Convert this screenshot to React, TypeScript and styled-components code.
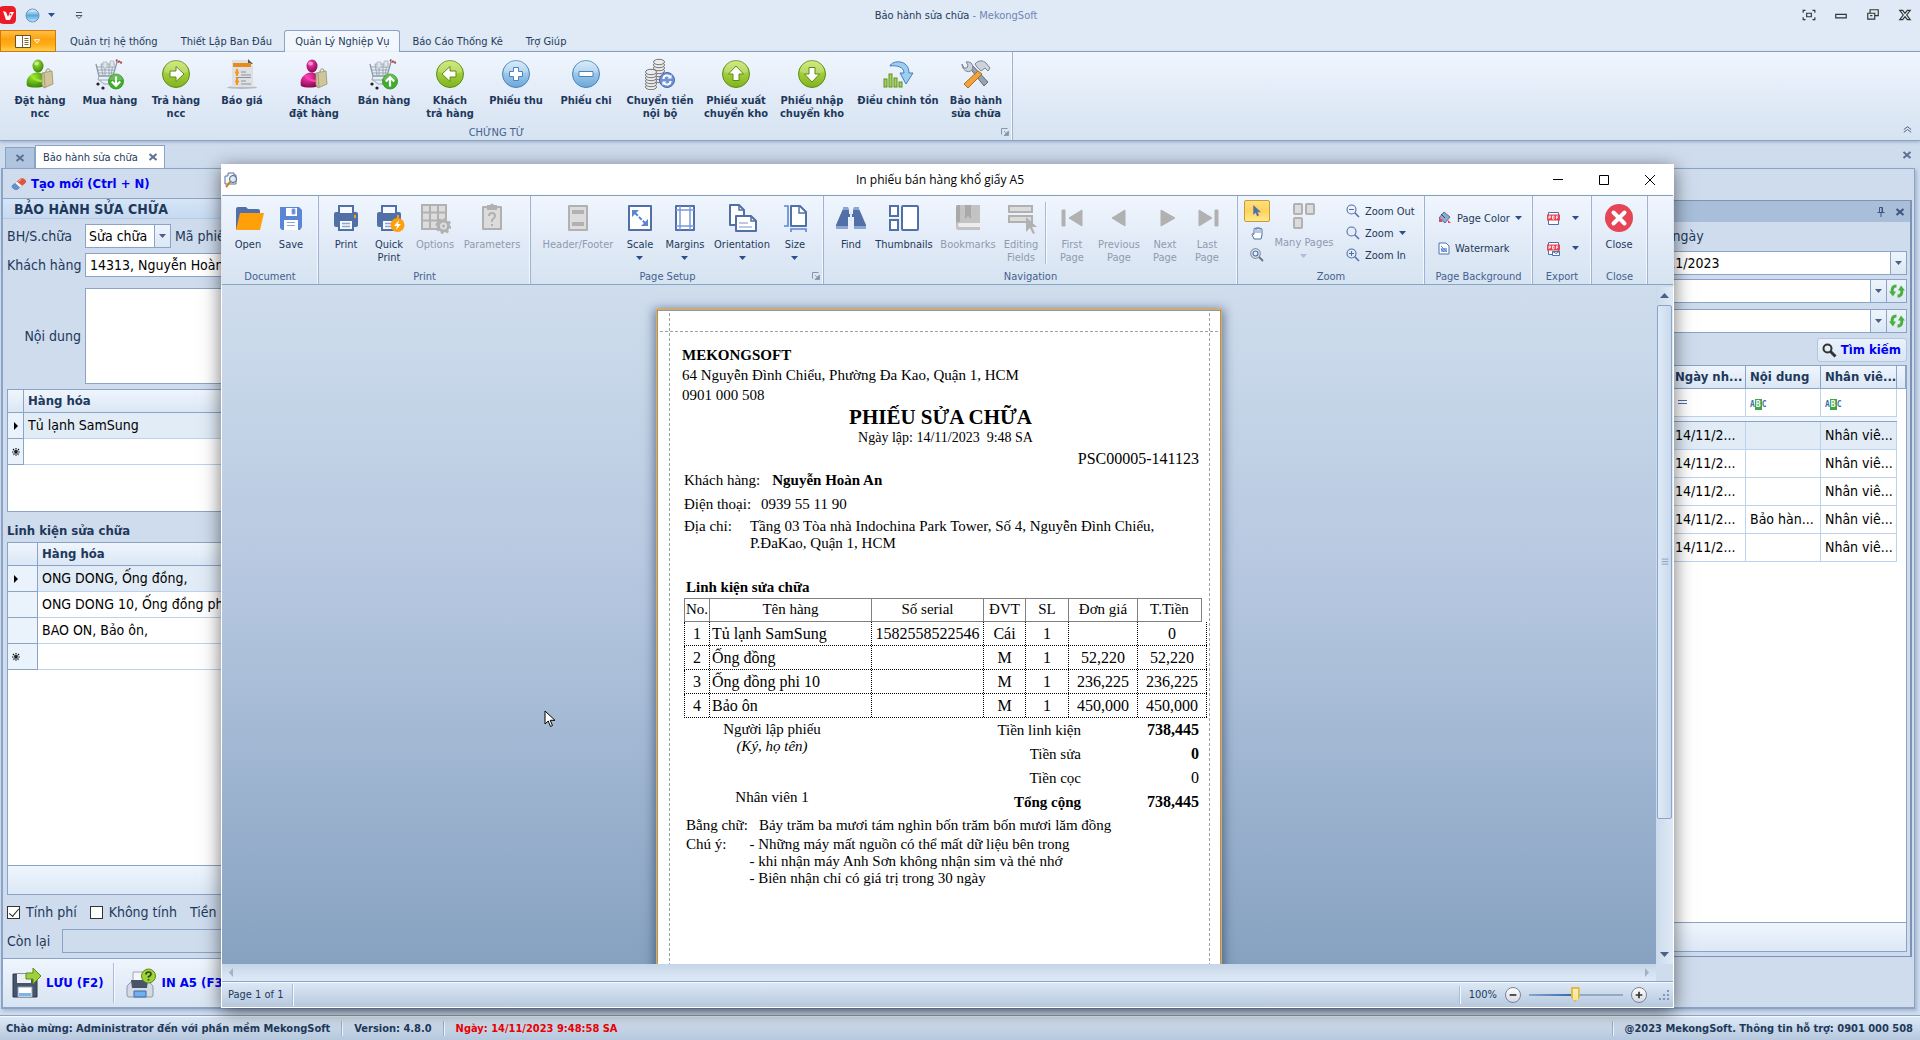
import React from 'react';
import styled, { createGlobalStyle, css } from 'styled-components';

const UI = '"DejaVu Sans Condensed", "DejaVu Sans", sans-serif';
const SERIF = '"Liberation Serif", serif';
const INK = '#1e395b';
const LINE = '#8ba3c4';
const PANEL = '#cfdced';

const Global = createGlobalStyle`
  * { box-sizing: border-box; }
  body { margin: 0; background: ${PANEL}; font: 11px/13px ${UI}; color: ${INK}; }
  button, input, select, textarea { font: inherit; color: inherit; margin: 0; }
  button { background: none; border: 0; padding: 0; cursor: default; }
  h1, h2, h3, p, ul { margin: 0; padding: 0; }
  svg { display: block; flex: none; }
`;

/* ---------- shell ---------- */

const Shell = styled.div`
  position: relative;
  display: flex;
  flex-direction: column;
  min-height: 100vh;
  background: ${PANEL};
  overflow: hidden;
`;
const TitleBar = styled.header`
  display: flex;
  align-items: center;
  height: 30px;
  background: #dfeaf6;
`;
const TitleSide = styled.div<{ $end?: boolean }>`
  display: flex;
  flex: 1 1 0;
  align-items: center;
  gap: ${(p) => (p.$end ? 18 : 8)}px;
  justify-content: ${(p) => (p.$end ? 'flex-end' : 'flex-start')};
  padding-right: ${(p) => (p.$end ? 8 : 0)}px;
`;
const AppName = styled.h1`
  font-size: 11px;
  font-weight: normal;
  color: ${INK};
  span { color: #6f86ae; }
`;
const TabStrip = styled.nav`
  display: flex;
  height: 22px;
  background: #dfeaf6;
  border-bottom: 1px solid ${LINE};
`;
const FileButton = styled.button`
  display: flex;
  align-items: center;
  justify-content: center;
  gap: 2px;
  width: 56px;
  height: 22px;
  border: 1px solid #d9770f;
  background: linear-gradient(#ffc04a, #fba20c 40%, #ffae1c 70%, #ffd34e);
`;
const RibbonTab = styled.button<{ $active?: boolean }>`
  height: 22px;
  padding: 0 10px;
  border: 1px solid transparent;
  border-bottom: 0;
  ${(p) =>
    p.$active &&
    css`
      background: #f2f7fe;
      border-color: ${LINE};
      border-radius: 3px 3px 0 0;
    `}
`;
const Tabs = styled.div`
  display: flex;
  gap: 1px;
  padding-left: 3px;
`;

/* ---------- ribbon ---------- */

const Ribbon = styled.div`
  display: flex;
  height: 89px;
  background: linear-gradient(#f0f6fe, #e3ecf8 45%, #d6e3f1);
  border-bottom: 1px solid ${LINE};
  box-shadow: 0 1px 3px rgba(90, 115, 155, 0.45);
  position: relative;
`;
const Group = styled.section<{ $w?: number }>`
  display: grid;
  grid-template-rows: 1fr 16px;
  width: ${(p) => (p.$w ? p.$w + 'px' : 'auto')};
  border-right: 1px solid #9fb3d0;
  box-shadow: inset -1px 0 #f3f8fe;
`;
const GroupBody = styled.div<{ $pad?: number; $top?: number }>`
  display: flex;
  align-items: flex-start;
  padding: ${(p) => p.$top ?? 6}px 0 0 ${(p) => p.$pad ?? 6}px;
`;
const GroupCaption = styled.h3`
  display: flex;
  align-items: center;
  justify-content: center;
  font-size: 11px;
  font-weight: normal;
  line-height: 13px;
  color: #44608f;
`;
const CaptionText = styled.span`
  flex: 1;
  padding-right: 8px;
  text-align: center;
`;
const LargeButton = styled.button<{ $w: number; $bold?: boolean }>`
  display: flex;
  flex-direction: column;
  align-items: center;
  width: ${(p) => p.$w}px;
  font-weight: ${(p) => (p.$bold ? 'bold' : 'normal')};
  color: ${INK};
  white-space: nowrap;
  gap: 4px;
  &:disabled { color: #8e9bae; }
`;
const ButtonLabel = styled.span`
  display: flex;
  flex-direction: column;
  align-items: center;
`;
const ArrowSlot = styled.span`
  display: flex;
  height: 13px;
  align-items: center;
`;
const Divider = styled.span<{ $h: number }>`
  width: 2px;
  height: ${(p) => p.$h}px;
  margin: 0 3px;
  border-left: 1px solid #a9bcd6;
  border-right: 1px solid #f6faff;
`;
const SmallColumn = styled.div<{ $pad?: number; $gap?: number }>`
  display: flex;
  flex-direction: column;
  gap: ${(p) => p.$gap ?? 0}px;
  padding-left: ${(p) => p.$pad ?? 0}px;
`;
const SmallButton = styled.button`
  display: flex;
  align-items: center;
  gap: 5px;
  height: 22px;
  padding: 0 2px;
  white-space: nowrap;
`;
const ToolButton = styled.button<{ $on?: boolean }>`
  display: flex;
  align-items: center;
  justify-content: center;
  width: 26px;
  height: 22px;
  border: 1px solid transparent;
  border-radius: 2px;
  ${(p) =>
    p.$on &&
    css`
      border-color: #c79a3c;
      background: linear-gradient(#ffdf7c, #ffd25e 50%, #ffe98a);
    `}
`;

/* ---------- documents ---------- */

const DocTabs = styled.div`
  display: flex;
  align-items: flex-end;
  height: 27px;
  padding: 0 8px 0 5px;
`;
const DocTab = styled.div<{ $active?: boolean }>`
  display: flex;
  align-items: center;
  justify-content: space-between;
  gap: 10px;
  height: ${(p) => (p.$active ? 23 : 21)}px;
  padding: ${(p) => (p.$active ? '0 6px 0 7px' : '0 9px')};
  border: 1px solid ${LINE};
  border-bottom: 0;
  background: ${(p) => (p.$active ? '#fff' : '#afc4de')};
`;
const Spacer = styled.span`
  flex: 1;
`;
const TabsClose = styled.button`
  align-self: center;
`;
const Workspace = styled.main`
  display: flex;
  flex: 1;
  margin: 0 5px 6px 1px;
  border: 1px solid ${LINE};
  border-left-width: 2px;
  border-bottom-width: 2px;
  box-shadow: 2px 2px 3px rgba(90, 115, 155, 0.35);
`;
const LeftPane = styled.section`
  display: flex;
  flex-direction: column;
  flex: 1;
  min-width: 0;
`;
const PaneToolbar = styled.div`
  display: flex;
  align-items: center;
  height: 29px;
  padding-left: 8px;
`;
const LinkButton = styled.button<{ $gap?: number }>`
  display: flex;
  align-items: center;
  gap: ${(p) => p.$gap ?? 4}px;
  font-size: 13px;
  line-height: 16px;
  font-weight: bold;
  color: #0000f5;
  white-space: nowrap;
`;
const PaneTitle = styled.h2`
  height: 21px;
  padding-left: 11px;
  border-top: 1px solid ${LINE};
  border-bottom: 1px solid #b3cbe8;
  background: linear-gradient(#d7e5f6, #c6daf1);
  font-size: 14px;
  line-height: 20px;
`;
const Form = styled.form`
  display: flex;
  flex-direction: column;
  flex: 1;
  padding: 5px 4px 5px;
  font-size: 14px;
  line-height: 17px;
`;
const FormRow = styled.div<{ $mb?: number; $gap?: number; $h?: number }>`
  display: flex;
  align-items: center;
  gap: ${(p) => p.$gap ?? 4}px;
  height: ${(p) => (p.$h ? p.$h + 'px' : 'auto')};
  margin-bottom: ${(p) => p.$mb ?? 5}px;
`;
const FieldLabel = styled.label<{ $w?: number; $end?: boolean }>`
  flex: none;
  width: ${(p) => (p.$w ? p.$w + 'px' : 'auto')};
  text-align: ${(p) => (p.$end ? 'right' : 'left')};
  white-space: nowrap;
`;
const boxed = css`
  border: 1px solid ${LINE};
  background: #fff;
  color: #000;
  border-radius: 0;
  outline: 0;
`;
const TextInput = styled.input`
  ${boxed}
  flex: 1;
  min-width: 0;
  height: 24px;
  padding: 0 4px;
  &:read-only { background: transparent; }
`;
const TextArea = styled.textarea`
  ${boxed}
  flex: 1;
  height: 96px;
  resize: none;
`;
const Combo = styled.div<{ $w?: number }>`
  ${boxed}
  display: flex;
  height: 24px;
  width: ${(p) => (p.$w ? p.$w + 'px' : '100%')};
`;
const ComboSelect = styled.select`
  appearance: none;
  flex: 1;
  min-width: 0;
  border: 0;
  padding: 0 3px;
  background: transparent;
  color: #000;
`;
const ComboInput = styled.input`
  flex: 1;
  min-width: 0;
  border: 0;
  padding: 0 6px;
  background: transparent;
  color: #000;
`;
const ComboButton = styled.button<{ $w?: number }>`
  display: flex;
  align-items: center;
  justify-content: center;
  width: ${(p) => p.$w ?? 16}px;
  border-left: 1px solid ${LINE};
  background: linear-gradient(#eef4fd, #dbe7f5);
`;
const CheckLabel = styled.label`
  display: flex;
  align-items: center;
  gap: 6px;
  white-space: nowrap;
`;
const Check = styled.input`
  appearance: none;
  width: 13px;
  height: 13px;
  border: 1px solid #333;
  background: #fff;
  &:checked::before {
    content: '';
    display: block;
    width: 9px;
    height: 4px;
    margin: 2px 0 0 1px;
    border-left: 1px solid #222;
    border-bottom: 1px solid #222;
    transform: rotate(-50deg);
  }
`;
const SubTitle = styled.h3`
  height: 30px;
  padding-top: 2px;
  font-size: 13px;
  line-height: 33px;
`;
const GridFrame = styled.div<{ $h?: number; $grow?: boolean }>`
  display: flex;
  flex-direction: column;
  height: ${(p) => (p.$h ? p.$h + 'px' : 'auto')};
  flex: ${(p) => (p.$grow ? 1 : 'none')};
  border: 1px solid ${LINE};
  background: #fff;
`;
const GridFooter = styled.div`
  height: 29px;
  margin-top: auto;
  border-top: 1px solid ${LINE};
  background: linear-gradient(#eff5fd, #dce8f6);
`;
const DataTable = styled.table`
  width: 100%;
  border-collapse: separate;
  border-spacing: 0;
  table-layout: fixed;
  font-size: 14px;
  line-height: 16px;
  color: #000;
`;
const HeadCell = styled.th`
  height: 23px;
  padding: 0 4px;
  border-right: 1px solid ${LINE};
  border-bottom: 1px solid ${LINE};
  background: linear-gradient(#eff5fd, #dbe7f5);
  font-size: 13px;
  text-align: left;
  white-space: nowrap;
  color: ${INK};
`;
const Cell = styled.td<{ $h: number; $on?: boolean; $rule?: boolean }>`
  height: ${(p) => p.$h}px;
  padding: 0 4px 2px;
  border-bottom: 1px solid #bcd2ee;
  border-right: ${(p) => (p.$rule ? '1px solid #bcd2ee' : '0')};
  background: ${(p) => (p.$on ? '#e1ecf7' : '#fff')};
  white-space: nowrap;
`;
const MarkCell = styled.td`
  padding: 0 0 0 4px;
  border-right: 1px solid ${LINE};
  border-bottom: 1px solid ${LINE};
  background: #eaf2fc;
`;
const SplitRow = styled.td`
  height: 5px;
  padding: 0;
  border-bottom: 1px solid ${LINE};
  background: #f1f6fd;
`;
const ActionBar = styled.div`
  display: flex;
  align-items: center;
  height: 49px;
  padding-left: 9px;
  border-top: 1px solid ${LINE};
  background: linear-gradient(#eff5fd, #d8e4f2);
`;

/* ---------- search panel ---------- */

const SearchPanel = styled.aside`
  display: flex;
  flex-direction: column;
  width: 550px;
  margin: 31px 2px 50px 6px;
  border: 1px solid #7e93b3;
  border-right-width: 2px;
`;
const PanelHead = styled.header`
  display: flex;
  align-items: center;
  justify-content: flex-end;
  gap: 10px;
  height: 21px;
  padding-right: 5px;
  background: #a8bed9;
`;
const PanelBody = styled.form`
  display: flex;
  flex-direction: column;
  flex: 1;
  padding: 6px 3px 4px 4px;
  font-size: 14px;
  line-height: 17px;
`;
const DateGrid = styled.div`
  display: grid;
  grid-template-columns: 1fr 1fr;
  gap: 6px;
  margin-bottom: 4px;
  label { padding-left: 3px; }
`;
const Stack = styled.div`
  display: flex;
  flex-direction: column;
  gap: 6px;
  margin-bottom: 5px;
`;
const SearchButton = styled(LinkButton)`
  align-self: flex-end;
  height: 24px;
  margin-bottom: 3px;
  padding: 0 5px 0 4px;
  border: 1px solid #b4c5dc;
  border-radius: 3px;
  background: linear-gradient(#eaf2fb, #dbe6f4);
`;
const FilterMark = styled.span`
  display: inline-flex;
  align-items: center;
  font: bold 8px/9px "DejaVu Sans Mono", monospace;
  color: #4c6ea5;
  b {
    padding: 1px;
    background: #3fa648;
    color: #fff;
  }
`;

/* ---------- status bar ---------- */

const StatusBar = styled.footer`
  display: flex;
  align-items: center;
  height: 25px;
  padding: 0 7px 0 6px;
  border-top: 1px solid ${LINE};
  box-shadow: inset 0 1px #f4f9ff;
  background: linear-gradient(#dde9f6, #b6c8de);
  font-weight: bold;
  white-space: nowrap;
`;
const StatusText = styled.span<{ $alert?: boolean }>`
  color: ${(p) => (p.$alert ? '#f00000' : INK)};
`;
const StatusRule = styled.span`
  width: 2px;
  height: 15px;
  margin: 0 11px;
  border-left: 1px solid #9fb0c8;
  border-right: 1px solid #eef4fb;
`;

/* ---------- preview window ---------- */

const Preview = styled.section`
  position: absolute;
  inset: 164px 246px 32px 221px;
  display: flex;
  flex-direction: column;
  border: 1px solid #fff;
  background: #fff;
  box-shadow: 0 4px 18px rgba(0, 0, 0, 0.55);
`;
const PreviewTitle = styled.header`
  display: flex;
  align-items: center;
  height: 31px;
  border-bottom: 1px solid ${LINE};
  h2 {
    font: 12px/16px "Open Sans", "Noto Sans", sans-serif;
    color: #000;
  }
`;
const WindowButtons = styled.div`
  display: flex;
  flex: 1 1 0;
  justify-content: flex-end;
  gap: 34px;
  padding-right: 17px;
`;
const WindowIcon = styled.div`
  flex: 1 1 0;
  padding-left: 2px;
`;
const Canvas = styled.div`
  position: relative;
  display: grid;
  grid-template-columns: 1fr 17px;
  grid-template-rows: minmax(0, 1fr) 17px;
  flex: 1;
  min-height: 0;
  padding-top: 2px;
  background: linear-gradient(#cfdded, #b4c6df 45%, #84a0bf);
`;
const Sheets = styled.div`
  overflow: hidden;
  padding-top: 22px;
`;
const VScroll = styled.div`
  display: flex;
  flex-direction: column;
  align-items: center;
  padding: 4px 0 5px;
  gap: 5px;
  background: linear-gradient(90deg, #cbdaea, #dfeaf7);
`;
const VThumb = styled.div`
  display: flex;
  align-items: center;
  justify-content: center;
  width: 15px;
  height: 77%;
  border: 1px solid ${LINE};
  border-radius: 2px;
  background: linear-gradient(90deg, #dfeaf7, #c9d9ec);
`;
const HScroll = styled.div`
  display: flex;
  align-items: center;
  justify-content: space-between;
  padding: 0 5px;
  background: linear-gradient(#c6d6e8, #dfeaf7);
`;
const Corner = styled.div`
  background: ${PANEL};
`;
const PreviewStatus = styled.footer`
  display: flex;
  align-items: center;
  height: 26px;
  padding: 0 3px 0 6px;
  border-top: 1px solid ${LINE};
  box-shadow: inset 0 1px #f4f9ff;
  background: linear-gradient(#dde9f6, #b6c8de);
  white-space: nowrap;
`;
const ZoomBox = styled.label`
  display: flex;
  align-items: center;
  gap: 8px;
`;
const ZoomRange = styled.input`
  appearance: none;
  width: 94px;
  height: 16px;
  background: linear-gradient(90deg, #8aa5cb, #2f68ad 48%, #94a9c6 50%) center / 100% 2px no-repeat;
  &::-webkit-slider-thumb {
    appearance: none;
    width: 9px;
    height: 15px;
    background: linear-gradient(#fdf3c0, #fbe28a);
    border: 2px solid #e8b83c;
    clip-path: polygon(0 0, 100% 0, 100% 68%, 50% 100%, 0 68%);
  }
`;
const RoundButton = styled.button`
  display: flex;
  align-items: center;
  justify-content: center;
  width: 16px;
  height: 16px;
  border: 1px solid #7b8394;
  border-radius: 50%;
  background: linear-gradient(#fff, #d5d9e2);
`;
const Gap = styled.span<{ $w: number }>`
  width: ${(p) => p.$w}px;
`;
const Pointer = styled.div`
  position: absolute;
  left: 322px;
  top: 425px;
`;

/* ---------- receipt ---------- */

const Sheet = styled.article`
  position: relative;
  width: 566px;
  min-height: 796px;
  margin: 0 auto;
  padding: 35px 16px 20px 25px;
  border: 1px solid #f5a623;
  background: #fff;
  box-shadow: inset 0 0 0 1px #8f97a6, 0 2px 10px 2px rgba(30, 50, 80, 0.55);
  font: 15px/17px ${SERIF};
  color: #000;
`;
const VGuide = styled.i<{ $right?: boolean }>`
  position: absolute;
  top: 3px;
  bottom: 3px;
  ${(p) => (p.$right ? 'right: 11px' : 'left: 12px')};
  border-left: 1px dashed #a0a0a0;
`;
const HGuide = styled.i`
  position: absolute;
  top: 21px;
  left: 3px;
  right: 3px;
  border-top: 1px dashed #a0a0a0;
`;
const Letterhead = styled.header`
  line-height: 20px;
`;
const SlipTitle = styled.h2`
  padding-right: 6px;
  text-align: center;
  font-size: 21px;
  line-height: 24px;
`;
const SlipDate = styled.p`
  padding-left: 4px;
  text-align: center;
  font-size: 14px;
  line-height: 18px;
`;
const SlipCode = styled.p`
  padding: 2px 6px 3px 0;
  text-align: right;
  font-size: 16px;
  line-height: 20px;
`;
const Facts = styled.dl<{ $in?: number }>`
  margin: 0;
  padding-left: ${(p) => p.$in ?? 2}px;
`;
const Fact = styled.div<{ $gap: number; $h?: number }>`
  display: flex;
  gap: ${(p) => p.$gap}px;
  min-height: ${(p) => p.$h ?? 24}px;
  dd, dt { margin: 0; }
  dt { white-space: nowrap; }
`;
const PartsTitle = styled.h3`
  padding: 0 0 2px 4px;
  font-size: 15px;
  line-height: 17px;
`;
const Parts = styled.table`
  display: block;
  margin-left: 2px;
  font-size: 16px;
  line-height: 23px;
  thead, tbody { display: block; }
`;
const HeadLine = styled.tr`
  display: grid;
  grid-template-columns: 25px 162px 112px 42px 43px 69px 64px;
  width: 518px;
  border-top: 1px solid #808080;
  border-left: 1px solid #808080;
  border-bottom: 1px solid #808080;
`;
const PartHead = styled.th`
  padding: 0;
  height: 22px;
  border-right: 1px solid #808080;
  font-size: 15px;
  font-weight: normal;
  line-height: 21px;
`;
const PartLine = styled.tr`
  display: grid;
  grid-template-columns: 25px 162px 112px 42px 43px 69px 69px;
  width: 523px;
  border-left: 1px dotted #000;
  border-bottom: 1px dotted #000;
`;
const PartCell = styled.td<{ $left?: boolean }>`
  height: 23px;
  padding: ${(p) => (p.$left ? '0 0 0 2px' : '0')};
  border-right: 1px dotted #000;
  text-align: ${(p) => (p.$left ? 'left' : 'center')};
`;
const Closing = styled.div`
  display: grid;
  grid-template-columns: 180px 219px 118px;
  height: 99px;
  padding-top: 3px;
`;
const Signature = styled.div`
  display: flex;
  flex-direction: column;
  align-items: center;
  padding-bottom: 11px;
  line-height: 17px;
  em { flex: 1; }
`;
const SumColumn = styled.div<{ $big?: boolean }>`
  display: flex;
  flex-direction: column;
  text-align: right;
  font-size: ${(p) => (p.$big ? 16 : 15)}px;
  line-height: 18px;
  gap: 6px;
`;
const Notes = styled.ul`
  list-style: none;
`;

/* ---------- icons ---------- */

type Tone = 'green' | 'blue';
const tones = {
  green: ['#c3e45a', '#7fb41c', '#5d8c13'],
  blue: ['#cbe7f8', '#6ba6da', '#4b82ba'],
};
const Orb = ({ tone, d, id }: { tone: Tone; d: string; id: string }) => (
  <svg width="32" height="32" viewBox="0 0 32 32">
    <defs>
      <linearGradient id={id} x1="0" y1="0" x2="0" y2="1">
        <stop offset="0" stopColor={tones[tone][0]} />
        <stop offset="1" stopColor={tones[tone][1]} />
      </linearGradient>
    </defs>
    <circle cx="16" cy="16" r="13.5" fill={`url(#${id})`} stroke={tones[tone][2]} />
    <path d="M4 14a12 12 0 0 1 24 0q-12 4-24 0z" fill="#fff" opacity=".22" />
    <path d={d} fill="#fff" stroke={tones[tone][2]} strokeLinejoin="round" />
  </svg>
);
const ARROW_R = 'M10 13h6V8.500l8 7.500-8 7.500V19h-6z';
const ARROW_L = 'M22 13h-6V8.500L8 16l8 7.500V19h6z';
const ARROW_U = 'M13 22.500V16H8.500L16 8l7.500 8H19v6.500z';
const ARROW_D = 'M13 9.500V16H8.500L16 24l7.500-8H19V9.500z';
const PLUS = 'M13.500 9.500h5v4h4v5h-4v4h-5v-4h-4v-5h4z';
const MINUS = 'M9 13.500h14v5H9z';

const Shopper = ({ c, dark, id }: { c: string; dark: string; id: string }) => (
  <svg width="32" height="32" viewBox="0 0 32 32">
    <defs>
      <radialGradient id={id} cx=".4" cy=".3" r=".8">
        <stop offset="0" stopColor={c} />
        <stop offset="1" stopColor={dark} />
      </radialGradient>
    </defs>
    <path d="M3 28c-1-5 0-9 5-12 3-2 8-2 10 0 3 3 3 9 2 12-4 2-13 2-17 0z" fill={`url(#${id})`} />
    <ellipse cx="14" cy="8" rx="5.500" ry="6.500" fill={`url(#${id})`} />
    <ellipse cx="12.500" cy="5.500" rx="2.500" ry="2" fill="#fff" opacity=".45" />
    <path d="M7 17c3 4 6 6 11 6" stroke={c} strokeWidth="2.500" fill="none" />
    <path d="M18 15l10-2 1 13-9 4-2-3z" fill="#cfc79b" stroke="#97906a" strokeWidth=".8" />
    <path d="M20 15l1 14" stroke="#97906a" strokeWidth=".8" />
    <path d="M22 14c0-4 4-4 4-1" stroke="#8d8460" fill="none" />
  </svg>
);
const Cart = ({ up }: { up?: boolean }) => (
  <svg width="32" height="32" viewBox="0 0 32 32">
    <path d="M2 6l3 12h14l4-14h4" fill="none" stroke="#8b98a3" strokeWidth="1.300" />
    <path d="M3 9h18M4 12h16M5 15h15M7 6l2 12M11 4v14M15 6v12M19 5l-2 13M7 6h14M5 18l-1 4h14" fill="none" stroke="#9aa6b0" />
    <path d="M9 4h4v6H9zM16 3h4v6h-4z" fill="#dfe5ea" stroke="#a3aeb8" strokeWidth=".7" />
    <path d="M22 2l6 3" stroke="#b23a3a" strokeWidth="2.200" strokeDasharray="1.500 1" />
    <circle cx="4" cy="26" r="1.600" fill="#222" />
    <circle cx="9" cy="30" r="1.600" fill="#222" />
    <path d="M5 22l5 4h6" stroke="#9aa6b0" fill="none" />
    <circle cx="22" cy="23.500" r="7.500" fill="#3fae2b" stroke="#2b8a1c" strokeWidth=".8" />
    <path d="M15.500 22a6.500 6.500 0 0 1 13 0z" fill="#fff" opacity=".2" />
    <path d={up ? 'M22 28.500v-9M17.800 23.500l4.200-4.300 4.200 4.300' : 'M22 18.500v9M17.800 23.500l4.200 4.300 4.200-4.300'} fill="none" stroke="#fff" strokeWidth="2.200" />
  </svg>
);
const Quote = () => (
  <svg width="32" height="32" viewBox="0 0 32 32">
    <ellipse cx="16" cy="29.500" rx="15" ry="1.500" fill="#9a9a9a" opacity=".6" />
    <path d="M6 2h16l5 5v22H6z" fill="#dfe0e3" />
    <path d="M22 1l5 5h-5z" fill="#555a60" />
    <path d="M7 5h18v4H7z" fill="#e78b1c" />
    <path d="M15 14h5M15 17h10M10 19.500h15M15 23h5M15 26h10" stroke="#8d9299" strokeWidth="1.200" />
    <path d="M11 11v7M9 14.500h4M11 20v7M9 23.500h4" stroke="#f39a1e" strokeWidth="2.200" />
  </svg>
);
const Coins = () => (
  <svg width="34" height="32" viewBox="0 0 34 32">
    {[22, 19, 16, 13, 10, 7, 4].map((y) => (
      <ellipse key={y} cx="16" cy={y} rx="5.500" ry="2.700" fill="#ececec" stroke="#777" />
    ))}
    {[29, 26, 23, 20, 17, 14].map((y) => (
      <ellipse key={y} cx="8" cy={y} rx="5.500" ry="2.700" fill="#ececec" stroke="#777" />
    ))}
    <circle cx="24" cy="22" r="7.500" fill="#6f93d6" stroke="#4568b0" />
    <path d="M20.500 21c0-4 5-4.500 6.500-2M27.500 23c0 4-5 4.500-6.500 2" stroke="#fff" strokeWidth="2" fill="none" />
    <path d="M28.500 16.500v4h-4zM19.500 27.500v-4h4z" fill="#fff" />
  </svg>
);
const StockAdjust = () => (
  <svg width="34" height="32" viewBox="0 0 34 32">
    {[[3, 21], [8, 16], [13, 20], [18, 24]].map(([x, y]) => (
      <rect key={x} x={x} y={y} width="3" height={29 - y} fill="#a8cf5a" stroke="#5f8f1e" />
    ))}
    <path d="M9 8c2-6 19-7 19 7h4l-7 11-6-11h4c0-6-7-8-14-7z" fill="#9fcdf0" stroke="#3f7fbd" strokeLinejoin="round" />
  </svg>
);
const Tools = () => (
  <svg width="32" height="32" viewBox="0 0 32 32">
    <path d="M9 9l15 19 4-4L12 7z" fill="#98a2b1" stroke="#5f6a7b" />
    <path d="M2 6l2 4h3l1-3-2-3c6-1 8 4 6 8-4 4-10 0-10-6z" fill="#ccd3dc" stroke="#7a8594" />
    <path d="M15 6c3-4 8-4 11-1l4 5-2 3-3-3-4 3-4-4z" fill="#ccd3dc" stroke="#7a8594" />
    <path d="M18 13l4 3L8 30l-4-4z" fill="#f2a33a" stroke="#b8681a" />
  </svg>
);
const Down = ({ c = '#2c4f8c', w = 7 }: { c?: string; w?: number }) => (
  <svg width={w} height="4" viewBox="0 0 7 4">
    <path d="M0 0h7L3.500 4z" fill={c} />
  </svg>
);
const Cross = ({ c = '#5f6f94', s = 10 }: { c?: string; s?: number }) => (
  <svg width={s} height={s} viewBox="0 0 10 10">
    <path d="M1.500 2l7 6M8.500 2l-7 6" stroke={c} strokeWidth="2" />
  </svg>
);
const Launcher = () => (
  <svg width="8" height="8" viewBox="0 0 8 8">
    <path d="M.5 6.500v-6h6" fill="none" stroke="#8793a8" />
    <path d="M7.500 3v4.500H3zM3 3l3 3" fill="#8793a8" stroke="#8793a8" strokeWidth=".8" />
  </svg>
);

const BL = '#5170a8';
const GR = '#b1b1b1';
const I = ({ children, w = 32 }: { children: React.ReactNode; w?: number }) => (
  <svg width={w} height="32" viewBox={`0 0 ${w} 32`}>
    {children}
  </svg>
);
const FolderIcon = () => (
  <I>
    <path d="M4 7q0-2 2-2h8l2 2h10q2 0 2 2v6H9L5 27H4z" fill={BL} />
    <path d="M8 11h24l-4 17H4z" fill="#ff9f0a" />
  </I>
);
const SaveIcon = () => (
  <I>
    <path d="M5 5h19l3 3v17l-2 3H7l-2-2z" fill="#5b86d6" />
    <path d="M11 6h11v8H11z M9 18h14v10H9z" fill="#fff" />
    <path d="M17 7h3v5h-3zM12 20.500h8M12 23.500h8" fill="#5b86d6" stroke="#8ca7dc" strokeWidth="1" />
  </I>
);
const PrinterShape = () => (
  <>
    <path d="M4 12q0-2 2-2h20q2 0 2 2v11q0 2-2 2H6q-2 0-2-2z" fill={BL} />
    <path d="M9 4h14v8H9zM9 18h14v10H9z" fill="#f6f9fe" stroke={BL} strokeWidth="2" />
    <path d="M12 21.500h8M12 24.500h8" stroke="#8fa4cd" strokeWidth="1.500" />
    <path d="M24 13h2v3h-2z" fill="#ff9f0a" />
  </>
);
const PrintIcon = () => <I><PrinterShape /></I>;
const QuickPrintIcon = () => (
  <I>
    <PrinterShape />
    <circle cx="24.500" cy="23" r="7" fill="#ff9f0a" />
    <path d="M26 18l-5 6h3l-1 4 5-6h-3z" fill="#fff" />
  </I>
);
const OptionsIcon = () => (
  <I>
    <path d="M3 3h24v24H3zM3 10.500h24M3 18.500h24M11 3v24M19 3v24" fill="#dcdcdc" stroke={GR} strokeWidth="2" />
    <circle cx="24.500" cy="24" r="5" fill="#ddd" stroke={GR} strokeWidth="3" />
    <circle cx="24.500" cy="24" r="7" fill="none" stroke={GR} strokeWidth="2" strokeDasharray="2.700 2.800" />
    <circle cx="24.500" cy="24" r="1.500" fill={GR} />
  </I>
);
const ParametersIcon = () => (
  <I>
    <path d="M7 5h18v22H7z" fill="#dcdcdc" stroke={GR} strokeWidth="2" strokeLinejoin="round" />
    <path d="M11 3h3q2-3 4 0h3v5H11z" fill={GR} />
    <path d="M13 14q0-3 3-3t3 3q0 2-3 4v2M16 22v2" fill="none" stroke={GR} strokeWidth="2" />
  </I>
);
const HeaderFooterIcon = () => (
  <I>
    <path d="M7 4h18v24H7z" fill="#dcdcdc" stroke={GR} strokeWidth="2" strokeLinejoin="round" />
    <path d="M10 8h12v4H10zM10 20h12v4H10z" fill={GR} />
  </I>
);
const ScaleIcon = () => (
  <I>
    <path d="M5 4h22v24H5z" fill="#fff" stroke={BL} strokeWidth="2" strokeLinejoin="round" />
    <path d="M8 8h7l-7 7zM24 24h-7l7-7z" fill="#5b86d6" />
    <path d="M11 11l10 10" stroke="#5b86d6" strokeWidth="2" strokeDasharray="4 1.500" />
  </I>
);
const MarginsIcon = () => (
  <I>
    <path d="M7 4h18v24H7z" fill="#fff" stroke={BL} strokeWidth="2" strokeLinejoin="round" />
    <path d="M11 4v24M21 4v24M7 8h18M7 24h18" stroke="#7b9bdc" strokeWidth="1.500" />
  </I>
);
const OrientationIcon = () => (
  <I>
    <path d="M4 3h9l5 5v15H4z" fill="#fff" stroke={BL} strokeWidth="2" strokeLinejoin="round" />
    <path d="M13 3v5h5" fill="none" stroke={BL} strokeWidth="1.500" />
    <path d="M10 14h15l5 5v10H10z" fill="#fff" stroke={BL} strokeWidth="2" strokeLinejoin="round" />
    <path d="M25 14v5h5" fill="none" stroke={BL} strokeWidth="1.500" />
    <path d="M13 21h9M13 25h13" stroke="#a9b9d9" strokeWidth="1.500" />
  </I>
);
const SizeIcon = () => (
  <I>
    <path d="M12 4h9l6 6v14H12z" fill="#fff" stroke={BL} strokeWidth="2" strokeLinejoin="round" />
    <path d="M20 4v7h7" fill="none" stroke={BL} strokeWidth="1.500" />
    <path d="M5 4h4v20H5M12 30v-3h15v3" fill="none" stroke="#5b86d6" strokeWidth="1.600" />
  </I>
);
const FindIcon = () => (
  <I>
    <path d="M7 9l2-4h4l1 4v3h4V9l1-4h4l2 4 6 14v4H19V15h-6v12H1v-4z" fill={BL} />
    <path d="M8 5h5v3H8zM19 5h5v3h-5zM1 24h12v3H1zM19 24h12v3H19z" fill="#8ca5d4" />
    <path d="M16 10v9" stroke="#dfe8f5" strokeWidth="2" />
  </I>
);
const ThumbnailsIcon = () => (
  <I>
    <rect x="2" y="4" width="8" height="10" fill="#fff" stroke={BL} strokeWidth="2" />
    <rect x="2" y="18" width="8" height="10" fill="#fff" stroke={BL} strokeWidth="2" />
    <rect x="14" y="4" width="16" height="24" rx="1" fill="#fff" stroke={BL} strokeWidth="2" />
  </I>
);
const BookmarksIcon = () => (
  <I>
    <path d="M4 5q0-2 2-2h22v25H6q-2 0-2-2z" fill="#c3c3c3" />
    <path d="M4 5q0-2 2-2h2v17H5l-1 2z" fill="#a9a9a9" />
    <path d="M13 3h6v14l-3-3-3 3z" fill="#a9a9a9" />
    <path d="M8 21h20v4H8q-2 0-2-2t2-2z" fill="#ededed" />
  </I>
);
const EditingIcon = () => (
  <I>
    <path d="M4 4h23v6H4zM4 14h23v6H4z" fill="#dcdcdc" stroke={GR} strokeWidth="2" />
    <path d="M21 15v15l4-4 3 6 2-1-3-6h5z" fill={GR} />
  </I>
);
const NavIcon = ({ d }: { d: string }) => (
  <I>
    <path d={d} fill={GR} stroke={GR} strokeWidth="1" strokeLinejoin="round" />
  </I>
);
const ManyPagesIcon = () => (
  <I>
    {[[6, 4], [18, 4], [6, 18]].map(([x, y]) => (
      <rect key={x + y * 9} x={x} y={y} width="8" height="10" rx="1" fill="#dcdcdc" stroke={GR} strokeWidth="2" />
    ))}
  </I>
);
const Glass = ({ d, c = BL }: { d?: string; c?: string }) => (
  <svg width="14" height="14" viewBox="0 0 14 14">
    <circle cx="5.500" cy="5.500" r="4.500" fill="none" stroke={c} strokeWidth="1.100" />
    <path d="M8.800 8.800l4.200 4.200" stroke={c} strokeWidth="1.600" />
    {d && <path d={d} stroke={c} />}
  </svg>
);
const PageGlass = () => (
  <svg width="14" height="14" viewBox="0 0 14 14">
    <circle cx="5.500" cy="5.500" r="4.800" fill="#e8eef8" stroke="#8a94a6" strokeWidth="1.200" />
    <circle cx="5.500" cy="5.500" r="2.500" fill="none" stroke={BL} strokeWidth="1.200" />
    <path d="M9 9l4 4" stroke="#6b6f78" strokeWidth="1.800" />
  </svg>
);
const PointerIcon = ({ fill = BL, stroke = BL, s = 12 }: { fill?: string; stroke?: string; s?: number }) => (
  <svg width={s} height={s * 1.5} viewBox="0 0 12 18">
    <path d="M1 1v13l3.200-3 2.300 5.500 2-1-2.300-5.200H11z" fill={fill} stroke={stroke} />
  </svg>
);
const HandIcon = () => (
  <svg width="13" height="14" viewBox="0 0 13 14">
    <path d="M3 13L1 8.500q0-2 2 0V3.500q0-1.500 1-1.500t1 1.500q0-2 1-2t1 1.500q0-1.500 1-1.500t1 2q0-1.200 1-1.200t1 1.700v5L10 13z" fill="#fff" stroke={BL} />
    <path d="M5 3.500V7M7 3.500V7M9 4V7" stroke={BL} strokeWidth=".8" />
  </svg>
);
const BucketIcon = () => (
  <svg width="14" height="14" viewBox="0 0 14 14">
    <path d="M6 1l6 5-5 6-6-5z" fill="#93a8cd" stroke={BL} />
    <path d="M1 8h3v3H1zM10 9l3 3h-3z" fill="#e64555" />
    <path d="M3 3l4 4" stroke="#444" />
  </svg>
);
const WatermarkIcon = () => (
  <svg width="12" height="13" viewBox="0 0 12 13">
    <path d="M1 1h7l3 3v8H1z" fill="#fff" stroke={BL} />
    <path d="M3 6h6v4H3z" fill="#8eabe2" />
    <path d="M3 4l6 6M3 7l3 3" stroke="#5b86d6" />
  </svg>
);
const PdfIcon = ({ mail }: { mail?: boolean }) => (
  <svg width="15" height="15" viewBox="0 0 15 15">
    <path d="M2.500 4V1.500h10V4M2.500 9v4.500h10V9" fill="#fff" stroke={BL} />
    <path d="M1 3.500h13v6H1z" fill="#e64555" />
    <path d="M3 8V5h1.500v1.500H3M6.500 5v3H8V5zM10.500 8V5H12M10.500 6.500h1.500" fill="none" stroke="#fff" strokeWidth=".8" />
    {mail && <path d="M6.500 10.500h7v4h-7zl3.500 2 3.500-2" fill="#fff" stroke={BL} />}
  </svg>
);
const CloseIcon = () => (
  <I>
    <circle cx="16" cy="16" r="14" fill="#e64555" />
    <path d="M10.500 10.500l11 11M21.500 10.500l-11 11" stroke="#fff" strokeWidth="4" strokeLinecap="round" />
  </I>
);
const Eraser = () => (
  <svg width="16" height="14" viewBox="0 0 16 14">
    <path d="M1 8.500L9.500 1.500q1.500-1 3 0l2 1.500q1.500 1.500 0 3L6.500 12.500q-1.500 1-3 0l-2-1.500q-1.500-1-.5-2.500z" fill="#d9573f" />
    <path d="M1 8.500L4 6l5 4.500-2.500 2q-1.500 1-3 0l-2-1.500q-1.500-1-.5-2.500z" fill="#5c93d0" />
    <path d="M4 6l2-1.600L11 8.800 9 10.500z" fill="#f1f1f1" />
    <path d="M7.500 4.500l3-2.500" stroke="#f7b3a0" />
  </svg>
);
const Disk = () => (
  <svg width="30" height="32" viewBox="0 0 30 32">
    <path d="M1 7h22l2 2v21H1z" fill="#46546e" stroke="#2c374c" />
    <path d="M5 7h14v9H5z" fill="#eceff3" />
    <path d="M6 20h14v10H6z" fill="#fff" stroke="#93a0b5" />
    <path d="M7 26h12v3H7z" fill="#7fb2ea" />
    <path d="M14 6h7V1l8 8-8 8v-5h-7z" fill="#9ed13b" stroke="#5c8c16" strokeLinejoin="round" />
  </svg>
);
const PrintHelp = () => (
  <svg width="30" height="32" viewBox="0 0 30 32">
    <path d="M7 5h12v12H7z" fill="#f4f6f9" stroke="#9aa6b8" />
    <path d="M1 20q0-2 2-3l2-2h18l2 2q2 1 2 3v8q0 2-2 2H3q-2 0-2-2z" fill="#d3dae4" stroke="#8b97aa" />
    <path d="M5 13h17l-1 8H6z" fill="#4a5468" />
    <path d="M8 24h12v6H8z" fill="#6fb0ee" stroke="#3e6ba0" />
    <circle cx="22.500" cy="9" r="7" fill="#9ed13b" stroke="#5c8c16" />
    <path d="M20 7.500q0-2.500 2.500-2.500t2.500 2.300q0 1.200-2.500 2.500v1M22.500 12v1.500" stroke="#2d4a0a" strokeWidth="1.700" fill="none" />
  </svg>
);
const Refresh = () => (
  <svg width="16" height="14" viewBox="0 0 16 14">
    <path d="M7.500 2C3.500 2 2.500 5 3.500 9M8.500 12c4 0 5-3 4-7" fill="none" stroke="#49b13c" strokeWidth="3" />
    <path d="M0 7.500h7L4 12.500zM16 6.500H9L12 1.500z" fill="#49b13c" />
  </svg>
);
const Pin = () => (
  <svg width="8" height="10" viewBox="0 0 8 10">
    <path d="M2.500 5.500v-5h3v5M.5 5.500h7M4 6v4" fill="none" stroke="#3d5380" />
    <path d="M4.500 1h1v4h-1z" fill="#3d5380" />
  </svg>
);
const Logo = () => (
  <svg width="17" height="18" viewBox="0 0 17 18">
    <path d="M0 1q2-1 4-1h7q5 0 5 5v8q0 5-5 5H4q-2 0-4-1z" fill="#ee1b24" />
    <path d="M3 5l3 1 2 5 2-5h4l-4 8H6z" fill="#fff" />
    <circle cx="10.500" cy="8.500" r="1" fill="#ee1b24" />
  </svg>
);
const Pearl = () => (
  <svg width="15" height="15" viewBox="0 0 15 15">
    <defs>
      <linearGradient id="pearl" x1="0" y1="0" x2="0" y2="1">
        <stop offset="0" stopColor="#f4fbff" />
        <stop offset=".5" stopColor="#5aa6de" />
        <stop offset="1" stopColor="#b7ecff" />
      </linearGradient>
    </defs>
    <circle cx="7.500" cy="7.500" r="6.500" fill="url(#pearl)" stroke="#6b93bb" />
  </svg>
);
const Book = () => (
  <svg width="16" height="13" viewBox="0 0 16 13">
    <path d="M.5.500h15v12H.500z" fill="#fff" stroke="#6b5320" />
    <path d="M7.500 1v11M9.500 3.500h4M9.500 5.500h4M9.500 7.500h4M9.500 9.500h4" stroke="#6b5320" strokeWidth=".9" />
  </svg>
);
const PreviewIcon = () => (
  <svg width="15" height="16" viewBox="0 0 15 16">
    <path d="M4 1h6v2h2v9H1V4h3z" fill="#f4f8fd" stroke="#5d7199" />
    <circle cx="9" cy="7" r="3.500" fill="#d7ecf7" stroke="#4f5d73" />
    <path d="M6.500 9.500L2 15" stroke="#c9822d" strokeWidth="2" />
  </svg>
);
const Marker = ({ fresh }: { fresh?: boolean }) => (
  <svg width="8" height="8" viewBox="0 0 8 8">
    {fresh ? (
      <path d="M4 0v8M0 4h8M1 1l6 6M7 1L1 7" stroke="#111" strokeWidth="1.200" strokeDasharray="1.500 .6" />
    ) : (
      <path d="M2 0l4 4-4 4z" fill="#000" />
    )}
  </svg>
);
const Line = ({ d, s = 12, c = '#333', w = 1 }: { d: string; s?: number; c?: string; w?: number }) => (
  <svg width={s} height={s} viewBox="0 0 12 12">
    <path d={d} fill="none" stroke={c} strokeWidth={w} />
  </svg>
);
const Tri = ({ d, c = '#a3b1c8' }: { d: string; c?: string }) => (
  <svg width="9" height="9" viewBox="0 0 9 9">
    <path d={d} fill={c} />
  </svg>
);

/* ---------- data ---------- */

const mainButtons: { w: number; text: string[]; icon: React.ReactNode }[] = [
  { w: 68, text: ['Đặt hàng', 'ncc'], icon: <Shopper id="sg" c="#9be82e" dark="#2f7a06" /> },
  { w: 72, text: ['Mua hàng'], icon: <Cart /> },
  { w: 60, text: ['Trả hàng', 'ncc'], icon: <Orb id="o1" tone="green" d={ARROW_R} /> },
  { w: 72, text: ['Báo giá'], icon: <Quote /> },
  { w: 72, text: ['Khách', 'đặt hàng'], icon: <Shopper id="sp" c="#ff3fb4" dark="#7c0045" /> },
  { w: 68, text: ['Bán hàng'], icon: <Cart up /> },
  { w: 64, text: ['Khách', 'trả hàng'], icon: <Orb id="o2" tone="green" d={ARROW_L} /> },
  { w: 68, text: ['Phiếu thu'], icon: <Orb id="o3" tone="blue" d={PLUS} /> },
  { w: 72, text: ['Phiếu chi'], icon: <Orb id="o4" tone="blue" d={MINUS} /> },
  { w: 76, text: ['Chuyển tiền', 'nội bộ'], icon: <Coins /> },
  { w: 76, text: ['Phiếu xuất', 'chuyển kho'], icon: <Orb id="o5" tone="green" d={ARROW_U} /> },
  { w: 76, text: ['Phiếu nhập', 'chuyển kho'], icon: <Orb id="o6" tone="green" d={ARROW_D} /> },
  { w: 96, text: ['Điều chỉnh tồn'], icon: <StockAdjust /> },
  { w: 60, text: ['Bảo hành', 'sửa chữa'], icon: <Tools /> },
];
const parts = [
  ['1', 'Tủ lạnh SamSung', '1582558522546', 'Cái', '1', '', '0'],
  ['2', 'Ống đồng', '', 'M', '1', '52,220', '52,220'],
  ['3', 'Ống đồng phi 10', '', 'M', '1', '236,225', '236,225'],
  ['4', 'Bảo ôn', '', 'M', '1', '450,000', '450,000'],
];
const found = ['', '', '', 'Bảo hàn...', ''];

const Large = (p: { w: number; text: string[]; icon: React.ReactNode; bold?: boolean; off?: boolean; menu?: boolean }) => (
  <LargeButton $w={p.w} $bold={p.bold} disabled={p.off}>
    {p.icon}
    <ButtonLabel>
      {p.text.map((t) => (
        <span key={t}>{t}</span>
      ))}
      {p.menu && (
        <ArrowSlot>
          <Down c={p.off ? '#a9c0e2' : undefined} />
        </ArrowSlot>
      )}
    </ButtonLabel>
  </LargeButton>
);

const Receipt = () => (
  <Sheet>
    <VGuide />
    <VGuide $right />
    <HGuide />
    <Letterhead>
      <p><b>MEKONGSOFT</b></p>
      <p>64 Nguyễn Đình Chiểu, Phường Đa Kao, Quận 1, HCM</p>
      <p>0901 000 508</p>
    </Letterhead>
    <SlipTitle>PHIẾU SỬA CHỮA</SlipTitle>
    <SlipDate>Ngày lập: 14/11/2023&nbsp; 9:48 SA</SlipDate>
    <SlipCode>PSC00005-141123</SlipCode>
    <Facts>
      <Fact $gap={12}><dt>Khách hàng:</dt><dd><b>Nguyễn Hoàn An</b></dd></Fact>
      <Fact $gap={10} $h={22}><dt>Điện thoại:</dt><dd>0939 55 11 90</dd></Fact>
      <Fact $gap={18} $h={61}>
        <dt>Địa chỉ:</dt>
        <dd>Tầng 03 Tòa nhà Indochina Park Tower, Số 4, Nguyễn Đình Chiểu, P.ĐaKao, Quận 1, HCM</dd>
      </Fact>
    </Facts>
    <PartsTitle>Linh kiện sửa chữa</PartsTitle>
    <Parts>
      <thead>
        <HeadLine>
          {['No.', 'Tên hàng', 'Số serial', 'ĐVT', 'SL', 'Đơn giá', 'T.Tiền'].map((h) => (
            <PartHead key={h}>{h}</PartHead>
          ))}
        </HeadLine>
      </thead>
      <tbody>
        {parts.map((r) => (
          <PartLine key={r[0]}>
            {r.map((c, i) => (
              <PartCell key={i} $left={i === 1}>{c}</PartCell>
            ))}
          </PartLine>
        ))}
      </tbody>
    </Parts>
    <Closing>
      <Signature>
        <span>Người lập phiếu</span>
        <em>(Ký, họ tên)</em>
        <span>Nhân viên 1</span>
      </Signature>
      <SumColumn>
        <span>Tiền linh kiện</span>
        <span>Tiền sửa</span>
        <span>Tiền cọc</span>
        <b>Tổng cộng</b>
      </SumColumn>
      <SumColumn $big>
        <b>738,445</b>
        <b>0</b>
        <span>0</span>
        <b>738,445</b>
      </SumColumn>
    </Closing>
    <Facts $in={4}>
      <Fact $gap={11} $h={19}><dt>Bằng chữ:</dt><dd>Bảy trăm ba mươi tám nghìn bốn trăm bốn mươi lăm đồng</dd></Fact>
      <Fact $gap={23}>
        <dt>Chú ý:</dt>
        <dd>
          <Notes>
            <li>- Những máy mất nguồn có thể mất dữ liệu bên trong</li>
            <li>- khi nhận máy Anh Sơn không nhận sim và thẻ nhớ</li>
            <li>- Biên nhận chỉ có giá trị trong 30 ngày</li>
          </Notes>
        </dd>
      </Fact>
    </Facts>
  </Sheet>
);

const PreviewWindow = () => (
  <Preview>
    <PreviewTitle>
      <WindowIcon><PreviewIcon /></WindowIcon>
      <h2>In phiếu bán hàng khổ giấy A5</h2>
      <WindowButtons>
        <button aria-label="Minimize"><Line d="M1 5.500h10" c="#000" /></button>
        <button aria-label="Maximize"><Line d="M1.500 1.500h9v9h-9z" c="#000" /></button>
        <button aria-label="Close window"><Line d="M1 1l10 10M11 1L1 11" c="#000" /></button>
      </WindowButtons>
    </PreviewTitle>
    <Ribbon>
      <Group $w={97}>
        <GroupBody $pad={4}>
          <Large w={44} text={['Open']} icon={<FolderIcon />} />
          <Large w={42} text={['Save']} icon={<SaveIcon />} />
        </GroupBody>
        <GroupCaption>Document</GroupCaption>
      </Group>
      <Group $w={212}>
        <GroupBody $pad={5}>
          <Large w={44} text={['Print']} icon={<PrintIcon />} />
          <Large w={42} text={['Quick', 'Print']} icon={<QuickPrintIcon />} />
          <Large w={50} text={['Options']} icon={<OptionsIcon />} off />
          <Large w={64} text={['Parameters']} icon={<ParametersIcon />} off />
        </GroupBody>
        <GroupCaption>Print</GroupCaption>
      </Group>
      <Group $w={293}>
        <GroupBody $pad={5}>
          <Large w={84} text={['Header/Footer']} icon={<HeaderFooterIcon />} off />
          <Large w={40} text={['Scale']} icon={<ScaleIcon />} menu />
          <Large w={50} text={['Margins']} icon={<MarginsIcon />} menu />
          <Large w={64} text={['Orientation']} icon={<OrientationIcon />} menu />
          <Large w={42} text={['Size']} icon={<SizeIcon />} menu />
        </GroupBody>
        <GroupCaption><CaptionText>Page Setup</CaptionText><Launcher /><Gap $w={3} /></GroupCaption>
      </Group>
      <Group $w={414}>
        <GroupBody>
          <Large w={42} text={['Find']} icon={<FindIcon />} />
          <Large w={64} text={['Thumbnails']} icon={<ThumbnailsIcon />} />
          <Large w={64} text={['Bookmarks']} icon={<BookmarksIcon />} off />
          <Large w={42} text={['Editing', 'Fields']} icon={<EditingIcon />} off />
          <Divider $h={62} />
          <Large w={44} text={['First', 'Page']} icon={<NavIcon d="M6 8h3v16H6zM26 8v16L13 16z" />} off />
          <Large w={50} text={['Previous', 'Page']} icon={<NavIcon d="M22 8v16L9 16z" />} off />
          <Large w={42} text={['Next', 'Page']} icon={<NavIcon d="M12 8v16l14-8z" />} off />
          <Large w={42} text={['Last', 'Page']} icon={<NavIcon d="M8 8v16l13-8zM24 8h3v16h-3z" />} off />
        </GroupBody>
        <GroupCaption>Navigation</GroupCaption>
      </Group>
      <Group $w={187}>
        <GroupBody $top={4} $pad={6}>
          <SmallColumn>
            <ToolButton $on aria-label="Pointer"><PointerIcon s={8} /></ToolButton>
            <ToolButton aria-label="Hand tool"><HandIcon /></ToolButton>
            <ToolButton aria-label="Magnifier"><PageGlass /></ToolButton>
          </SmallColumn>
          <Large w={68} text={['Many Pages']} icon={<ManyPagesIcon />} off menu />
          <SmallColumn $pad={6}>
            <SmallButton><Glass d="M3 5.500h5" />Zoom Out</SmallButton>
            <SmallButton><Glass />Zoom<Down /></SmallButton>
            <SmallButton><Glass d="M3 5.500h5M5.500 3v5" />Zoom In</SmallButton>
          </SmallColumn>
        </GroupBody>
        <GroupCaption>Zoom</GroupCaption>
      </Group>
      <Group $w={108}>
        <GroupBody $top={11} $pad={11}>
          <SmallColumn $gap={8}>
            <SmallButton><BucketIcon />Page Color<Down /></SmallButton>
            <SmallButton><WatermarkIcon />Watermark</SmallButton>
          </SmallColumn>
        </GroupBody>
        <GroupCaption>Page Background</GroupCaption>
      </Group>
      <Group $w={59}>
        <GroupBody $top={11} $pad={11}>
          <SmallColumn $gap={8}>
            <SmallButton aria-label="Export PDF"><PdfIcon /><Gap $w={1} /><Down /></SmallButton>
            <SmallButton aria-label="E-mail PDF"><PdfIcon mail /><Gap $w={1} /><Down /></SmallButton>
          </SmallColumn>
        </GroupBody>
        <GroupCaption>Export</GroupCaption>
      </Group>
      <Group $w={56}>
        <GroupBody>
          <Large w={42} text={['Close']} icon={<CloseIcon />} />
        </GroupBody>
        <GroupCaption>Close</GroupCaption>
      </Group>
    </Ribbon>
    <Canvas>
      <Sheets><Receipt /></Sheets>
      <VScroll>
        <Tri d="M0 7h9L4.500 2z" c="#4a5f8c" />
        <VThumb><Line d="M2 2.500h8M2 5.500h8M2 8.500h8" s={10} c="#7f95b8" /></VThumb>
        <Spacer />
        <Tri d="M0 2h9L4.500 7z" c="#4a5f8c" />
      </VScroll>
      <HScroll>
        <Tri d="M6 0v9L2 4.500z" />
        <Tri d="M3 0v9l4-4.500z" />
      </HScroll>
      <Corner />
      <Pointer><PointerIcon fill="#fff" stroke="#000" /></Pointer>
    </Canvas>
    <PreviewStatus>
      <span>Page 1 of 1</span>
      <Gap $w={6} />
      <Divider $h={22} />
      <Spacer />
      <Divider $h={18} />
      <Gap $w={5} />
      <ZoomBox>
        100%
        <RoundButton aria-label="Zoom out" type="button"><Line d="M2 6h8" s={10} w={2} /></RoundButton>
        <ZoomRange type="range" defaultValue={49} />
        <RoundButton aria-label="Zoom in" type="button"><Line d="M2 6h8M6 2v8" s={10} w={2} /></RoundButton>
      </ZoomBox>
      <Gap $w={12} />
      <svg width="11" height="12" viewBox="0 0 11 12">
        <path d="M8 1h2v2H8zM8 5h2v2H8zM4 5h2v2H4zM8 9h2v2H8zM4 9h2v2H4zM0 9h2v2H0z" fill="#7f97bb" />
      </svg>
    </PreviewStatus>
  </Preview>
);

export default function App() {
  return (
    <Shell>
      <Global />
      <TitleBar>
        <TitleSide>
          <Logo />
          <Pearl />
          <Down />
          <Gap $w={2} />
          <Line d="M3 3.500h6M3 6.500h6L6 9.500z" c="#555" />
        </TitleSide>
        <AppName>Bảo hành sửa chữa <span>- MekongSoft</span></AppName>
        <TitleSide $end>
          <Line d="M1 4V2h2M9 2h2v2M11 8v2H9M3 10H1V8M4 4.500h4v3H4z" s={14} />
          <Line d="M1.500 5.500h9v3h-9z" s={14} />
          <Line d="M3.500 4V1.500h7v5H8M1.500 4.500h6v5h-6zM3.500 6.500h2" s={14} />
          <Line d="M1.500 2h2.500l2 2.500L8 2h2.500L7.500 6l3 4H8L6 7.500 4 10H1.500l3-4z" s={14} />
        </TitleSide>
      </TitleBar>
      <TabStrip>
        <FileButton aria-label="Menu"><Book /><Line d="M2 4h8L6 9z" s={8} c="#fff" w={1.5} /></FileButton>
        <Tabs>
          <RibbonTab>Quản trị hệ thống</RibbonTab>
          <RibbonTab>Thiết Lập Ban Đầu</RibbonTab>
          <RibbonTab $active>Quản Lý Nghiệp Vụ</RibbonTab>
          <RibbonTab>Báo Cáo Thống Kê</RibbonTab>
          <RibbonTab>Trợ Giúp</RibbonTab>
        </Tabs>
      </TabStrip>
      <Ribbon>
        <Group>
          <GroupBody>
            {mainButtons.map((b) => (
              <Large key={b.text.join(' ')} {...b} bold />
            ))}
            <Gap $w={6} />
          </GroupBody>
          <GroupCaption><CaptionText>CHỨNG TỪ</CaptionText><Launcher /><Gap $w={3} /></GroupCaption>
        </Group>
        <Spacer />
        <TabsCollapse aria-label="Collapse ribbon"><Line d="M2 6l4-3 4 3M2 9l4-3 4 3" s={11} c="#44567a" /></TabsCollapse>
      </Ribbon>
      <DocTabs>
        <DocTab><button aria-label="Close tab"><Cross /></button></DocTab>
        <DocTab $active>Bảo hành sửa chữa<button aria-label="Close this tab"><Cross /></button></DocTab>
        <Spacer />
        <TabsClose aria-label="Close all"><Cross /></TabsClose>
      </DocTabs>
      <Workspace>
        <LeftPane>
          <PaneToolbar><LinkButton><Eraser />Tạo mới (Ctrl + N)</LinkButton></PaneToolbar>
          <PaneTitle>BẢO HÀNH SỬA CHỮA</PaneTitle>
          <Form>
            <FormRow>
              <FieldLabel $w={74} htmlFor="kind">BH/S.chữa</FieldLabel>
              <Combo $w={86}>
                <ComboSelect id="kind"><option>Sửa chữa</option></ComboSelect>
                <ComboButton type="button" aria-label="Open list"><Down c="#4a5f86" /></ComboButton>
              </Combo>
              <FieldLabel htmlFor="code">Mã phiếu</FieldLabel>
              <TextInput id="code" />
            </FormRow>
            <FormRow $mb={11}>
              <FieldLabel $w={74} htmlFor="customer">Khách hàng</FieldLabel>
              <TextInput id="customer" defaultValue="14313, Nguyễn Hoàn An" />
            </FormRow>
            <FormRow>
              <FieldLabel $w={74} $end htmlFor="content">Nội dung</FieldLabel>
              <TextArea id="content" />
            </FormRow>
            <GridFrame $h={123}>
              <DataTable>
                <colgroup><col width="16" /><col /></colgroup>
                <thead><tr><HeadCell /><HeadCell>Hàng hóa</HeadCell></tr></thead>
                <tbody>
                  <tr><MarkCell><Marker /></MarkCell><Cell $h={26} $on>Tủ lạnh SamSung</Cell></tr>
                  <tr><MarkCell><Marker fresh /></MarkCell><Cell $h={26} /></tr>
                </tbody>
              </DataTable>
            </GridFrame>
            <SubTitle>Linh kiện sửa chữa</SubTitle>
            <GridFrame $grow>
              <DataTable>
                <colgroup><col width="30" /><col /></colgroup>
                <thead><tr><HeadCell /><HeadCell>Hàng hóa</HeadCell></tr></thead>
                <tbody>
                  <tr><MarkCell><Marker /></MarkCell><Cell $h={26} $on>ONG DONG, Ống đồng,</Cell></tr>
                  <tr><MarkCell /><Cell $h={26}>ONG DONG 10, Ống đồng phi 10,</Cell></tr>
                  <tr><MarkCell /><Cell $h={26}>BAO ON, Bảo ôn,</Cell></tr>
                  <tr><MarkCell><Marker fresh /></MarkCell><Cell $h={26} /></tr>
                </tbody>
              </DataTable>
              <GridFooter />
            </GridFrame>
            <FormRow $mb={0} $gap={13} $h={34}>
              <CheckLabel><Check type="checkbox" defaultChecked />Tính phí</CheckLabel>
              <CheckLabel><Check type="checkbox" />Không tính</CheckLabel>
              <FieldLabel htmlFor="fee">Tiền sửa</FieldLabel>
              <Combo $w={120}><ComboInput id="fee" /></Combo>
            </FormRow>
            <FormRow $mb={0}>
              <FieldLabel $w={51} htmlFor="rest">Còn lại</FieldLabel>
              <TextInput id="rest" readOnly />
            </FormRow>
          </Form>
          <ActionBar>
            <LinkButton><Disk />LƯU (F2)</LinkButton>
            <Gap $w={6} />
            <Divider $h={40} />
            <Gap $w={8} />
            <LinkButton $gap={6}><PrintHelp />IN A5 (F3)</LinkButton>
          </ActionBar>
        </LeftPane>
        <SearchPanel>
          <PanelHead>
            <button aria-label="Pin"><Pin /></button>
            <button aria-label="Close panel"><Cross c="#3d5380" /></button>
          </PanelHead>
          <PanelBody>
            <DateGrid>
              <label htmlFor="from">Từ ngày</label>
              <label htmlFor="to">Đến ngày</label>
              <Combo>
                <ComboInput id="from" defaultValue="14/11/2023" />
                <ComboButton type="button" aria-label="Pick start"><Down c="#4a5f86" /></ComboButton>
              </Combo>
              <Combo>
                <ComboInput id="to" defaultValue="14/11/2023" />
                <ComboButton type="button" aria-label="Pick end"><Down c="#4a5f86" /></ComboButton>
              </Combo>
            </DateGrid>
            <Stack>
              {['Khách hàng', 'Nhân viên'].map((n) => (
                <Combo key={n}>
                  <ComboSelect aria-label={n} />
                  <ComboButton type="button" aria-label={n + ' list'}><Down c="#4a5f86" /></ComboButton>
                  <ComboButton type="button" $w={20} aria-label={n + ' refresh'}><Refresh /></ComboButton>
                </Combo>
              ))}
            </Stack>
            <SearchButton type="button">
              <svg width="15" height="15" viewBox="0 0 15 15">
                <circle cx="5.500" cy="5.500" r="4" fill="none" stroke="#333" strokeWidth="2" />
                <path d="M8.500 8.500l5 5" stroke="#333" strokeWidth="3" />
              </svg>
              Tìm kiếm
            </SearchButton>
            <GridFrame $grow>
              <DataTable>
                <colgroup><col /><col width="75" /><col width="75" /><col width="76" /><col width="9" /></colgroup>
                <thead>
                  <tr>
                    <HeadCell>Số phiếu</HeadCell>
                    <HeadCell>Ngày nh...</HeadCell>
                    <HeadCell>Nội dung</HeadCell>
                    <HeadCell>Nhân viê...</HeadCell>
                    <HeadCell />
                  </tr>
                </thead>
                <tbody>
                  <tr>
                    <Cell $h={28} $rule />
                    <Cell $h={28} $rule><Line d="M3 4.500h9M3 7.500h9" c="#4c6ea5" /></Cell>
                    <Cell $h={28} $rule><FilterMark>A<b>B</b>C</FilterMark></Cell>
                    <Cell $h={28} $rule><FilterMark>A<b>B</b>C</FilterMark></Cell>
                    <td />
                  </tr>
                  <tr><SplitRow colSpan={4} /><td /></tr>
                  {found.map((note, i) => (
                    <tr key={i}>
                      <Cell $h={28} $rule $on={i === 0} />
                      <Cell $h={28} $rule $on={i === 0}>14/11/2...</Cell>
                      <Cell $h={28} $rule $on={i === 0}>{note}</Cell>
                      <Cell $h={28} $rule $on={i === 0}>Nhân viê...</Cell>
                      <td />
                    </tr>
                  ))}
                </tbody>
              </DataTable>
              <GridFooter />
            </GridFrame>
          </PanelBody>
        </SearchPanel>
      </Workspace>
      <StatusBar>
        <StatusText>Chào mừng: Administrator đến với phần mềm MekongSoft</StatusText>
        <StatusRule />
        <StatusText>Version: 4.8.0</StatusText>
        <StatusRule />
        <StatusText $alert>Ngày: 14/11/2023 9:48:58 SA</StatusText>
        <Spacer />
        <StatusRule />
        <StatusText>@2023 MekongSoft. Thông tin hỗ trợ: 0901 000 508</StatusText>
      </StatusBar>
      <PreviewWindow />
    </Shell>
  );
}

const TabsCollapse = styled.button`
  align-self: flex-end;
  padding: 0 7px 5px;
`;
